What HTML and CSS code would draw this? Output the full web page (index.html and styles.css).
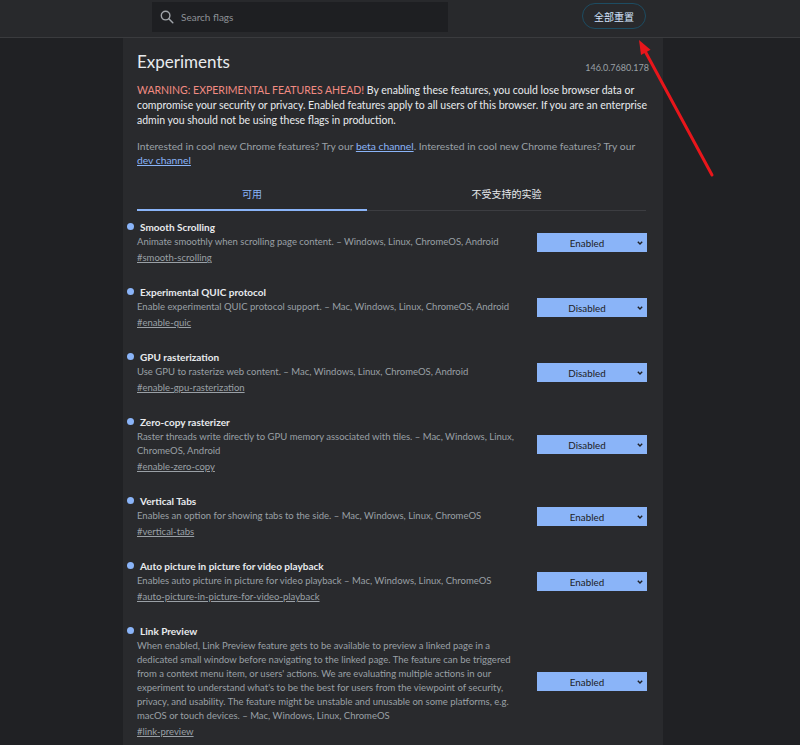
FILE: index.html
```html
<!DOCTYPE html>
<html lang="zh-CN">
<head>
  <meta charset="UTF-8" />
  <meta name="viewport" content="width=device-width, initial-scale=1.0" />
  <title>Experiments</title>
  <link rel="stylesheet" href="styles.css">
</head>
<body>
  <div class="flags-header">
    <div class="header-inner">
      <div class="search-box">
        <svg class="search-icon" width="14" height="14" viewBox="0 0 14 14">
          <circle cx="5.6" cy="5.6" r="4.3" fill="none" stroke="#a0a4a9" stroke-width="1.4"/>
          <line x1="8.8" y1="8.8" x2="12.8" y2="12.8" stroke="#a0a4a9" stroke-width="1.5" stroke-linecap="round"/>
        </svg>
        <input class="search-input" type="text" placeholder="Search flags">
      </div>
      <button class="reset-button">全部重置</button>
    </div>
  </div>

  <div class="panel">
    <div class="title-row">
      <h1>Experiments</h1>
      <span class="version">146.0.7680.178</span>
    </div>

    <p class="warning"><span class="warning-red">WARNING: EXPERIMENTAL FEATURES AHEAD!</span> By enabling these features, you could lose browser data or compromise your security or privacy. Enabled features apply to all users of this browser. If you are an enterprise admin you should not be using these flags in production.</p>

    <p class="channel">Interested in cool new Chrome features? Try our <a href="#">beta channel</a>. Interested in cool new Chrome features? Try our <a href="#">dev channel</a></p>

    <div class="tabs">
      <div class="tab tab-active">可用</div>
      <div class="tab">不受支持的实验</div>
    </div>

    <div class="experiments">
      <div class="experiment">
        <div class="experiment-text">
          <h3 class="experiment-name">Smooth Scrolling</h3>
          <p class="experiment-desc">Animate smoothly when scrolling page content. – Windows, Linux, ChromeOS, Android</p>
          <a class="experiment-link" href="#">#smooth-scrolling</a>
        </div>
        <div class="select-wrap">
          <select><option>Enabled</option><option>Disabled</option><option>Default</option></select>
          <svg class="chevron" width="6" height="4" viewBox="0 0 6 4"><path d="M0.8 0.8 L3 3 L5.2 0.8" fill="none" stroke="#202124" stroke-width="1.4"/></svg>
        </div>
      </div>

      <div class="experiment">
        <div class="experiment-text">
          <h3 class="experiment-name">Experimental QUIC protocol</h3>
          <p class="experiment-desc">Enable experimental QUIC protocol support. – Mac, Windows, Linux, ChromeOS, Android</p>
          <a class="experiment-link" href="#">#enable-quic</a>
        </div>
        <div class="select-wrap">
          <select><option>Disabled</option><option>Enabled</option><option>Default</option></select>
          <svg class="chevron" width="6" height="4" viewBox="0 0 6 4"><path d="M0.8 0.8 L3 3 L5.2 0.8" fill="none" stroke="#202124" stroke-width="1.4"/></svg>
        </div>
      </div>

      <div class="experiment">
        <div class="experiment-text">
          <h3 class="experiment-name">GPU rasterization</h3>
          <p class="experiment-desc">Use GPU to rasterize web content. – Mac, Windows, Linux, ChromeOS, Android</p>
          <a class="experiment-link" href="#">#enable-gpu-rasterization</a>
        </div>
        <div class="select-wrap">
          <select><option>Disabled</option><option>Enabled</option><option>Default</option></select>
          <svg class="chevron" width="6" height="4" viewBox="0 0 6 4"><path d="M0.8 0.8 L3 3 L5.2 0.8" fill="none" stroke="#202124" stroke-width="1.4"/></svg>
        </div>
      </div>

      <div class="experiment">
        <div class="experiment-text">
          <h3 class="experiment-name">Zero-copy rasterizer</h3>
          <p class="experiment-desc">Raster threads write directly to GPU memory associated with tiles. – Mac, Windows, Linux, ChromeOS, Android</p>
          <a class="experiment-link" href="#">#enable-zero-copy</a>
        </div>
        <div class="select-wrap">
          <select><option>Disabled</option><option>Enabled</option><option>Default</option></select>
          <svg class="chevron" width="6" height="4" viewBox="0 0 6 4"><path d="M0.8 0.8 L3 3 L5.2 0.8" fill="none" stroke="#202124" stroke-width="1.4"/></svg>
        </div>
      </div>

      <div class="experiment">
        <div class="experiment-text">
          <h3 class="experiment-name">Vertical Tabs</h3>
          <p class="experiment-desc">Enables an option for showing tabs to the side. – Mac, Windows, Linux, ChromeOS</p>
          <a class="experiment-link" href="#">#vertical-tabs</a>
        </div>
        <div class="select-wrap">
          <select><option>Enabled</option><option>Disabled</option><option>Default</option></select>
          <svg class="chevron" width="6" height="4" viewBox="0 0 6 4"><path d="M0.8 0.8 L3 3 L5.2 0.8" fill="none" stroke="#202124" stroke-width="1.4"/></svg>
        </div>
      </div>

      <div class="experiment">
        <div class="experiment-text">
          <h3 class="experiment-name">Auto picture in picture for video playback</h3>
          <p class="experiment-desc">Enables auto picture in picture for video playback – Mac, Windows, Linux, ChromeOS</p>
          <a class="experiment-link" href="#">#auto-picture-in-picture-for-video-playback</a>
        </div>
        <div class="select-wrap">
          <select><option>Enabled</option><option>Disabled</option><option>Default</option></select>
          <svg class="chevron" width="6" height="4" viewBox="0 0 6 4"><path d="M0.8 0.8 L3 3 L5.2 0.8" fill="none" stroke="#202124" stroke-width="1.4"/></svg>
        </div>
      </div>

      <div class="experiment">
        <div class="experiment-text">
          <h3 class="experiment-name">Link Preview</h3>
          <p class="experiment-desc">When enabled, Link Preview feature gets to be available to preview a linked page in a dedicated small window before navigating to the linked page. The feature can be triggered from a context menu item, or users' actions. We are evaluating multiple actions in our experiment to understand what's to be the best for users from the viewpoint of security, privacy, and usability. The feature might be unstable and unusable on some platforms, e.g. macOS or touch devices. – Mac, Windows, Linux, ChromeOS</p>
          <a class="experiment-link" href="#">#link-preview</a>
        </div>
        <div class="select-wrap">
          <select><option>Enabled</option><option>Disabled</option><option>Default</option></select>
          <svg class="chevron" width="6" height="4" viewBox="0 0 6 4"><path d="M0.8 0.8 L3 3 L5.2 0.8" fill="none" stroke="#202124" stroke-width="1.4"/></svg>
        </div>
      </div>
    </div>
  </div>

  <!-- annotation arrow pointing at the reset button -->
  <svg class="annotation" width="800" height="745" viewBox="0 0 800 745">
    <line x1="712" y1="175" x2="645.5" y2="52" stroke="#e8161b" stroke-width="3" stroke-linecap="round"/>
    <polygon points="639,40 650.5,49.7 641,55" fill="#e8161b"/>
  </svg>
</body>
</html>
```

FILE: styles.css
```css
* {
  box-sizing: border-box;
}

body {
  margin: 0;
  background-color: #202124;
  font-family: Lato, "Noto Sans CJK SC", sans-serif;
  font-size: 10px;
  color: #e8eaed;
  height: 745px;
  overflow: hidden;
}

.flags-header {
  height: 38px;
  background: #28292c;
  border-bottom: 1px solid #3a3b3e;
  padding-top: 2px;
}

.header-inner {
  margin-left: 152px;
  width: 494px;
  display: flex;
  justify-content: space-between;
  align-items: flex-start;
}

.search-box {
  width: 296px;
  height: 30px;
  background: #1e1f22;
  display: flex;
  align-items: center;
  padding-left: 8px;
  gap: 5px;
}

.search-input {
  flex: 1;
  background: transparent;
  border: none;
  outline: none;
  font-family: Lato, sans-serif;
  font-size: 10px;
  color: #e8eaed;
}

.search-input::placeholder {
  color: #8d9196;
}

.reset-button {
  margin-top: 1px;
  width: 64px;
  height: 26px;
  border: 1px solid #1d4c62;
  border-radius: 13px;
  background: transparent;
  color: #d2e3fc;
  font-family: "Noto Sans CJK SC", sans-serif;
  font-size: 10px;
  padding: 0;
  cursor: pointer;
}

.panel {
  margin-left: 123px;
  width: 540px;
  min-height: 707px;
  background: #292a2d;
  padding: 12px 16px 0 14px;
}

.title-row {
  display: flex;
  justify-content: space-between;
  align-items: flex-end;
}

.title-row h1 {
  margin: 0;
  font-size: 17px;
  font-weight: 400;
  line-height: 24px;
  color: #e8eaed;
}

.version {
  font-size: 9px;
  color: #9aa0a6;
  line-height: 14px;
  margin-bottom: -1px;
  margin-right: -2px;
}

.warning {
  margin: 9px 0 0;
  font-size: 10.5px;
  line-height: 15px;
  color: #e8eaed;
}

.warning-red {
  color: #f28b82;
}

.channel {
  margin: 11px 0 0;
  font-size: 10.3px;
  line-height: 14px;
  color: #9aa0a6;
}

.channel a {
  color: #8ab4f8;
}

.tabs {
  display: flex;
  margin-top: 13px;
  margin-right: 1px;
  border-bottom: 1px solid #3c3d41;
}

.tab {
  font-family: "Noto Sans CJK SC", sans-serif;
  font-size: 10px;
  text-align: center;
  padding: 6px 0 8px;
  color: #e8eaed;
  flex: 1;
}

.tab-active {
  flex: 0 0 230px;
  color: #8ab4f8;
  border-bottom: 2px solid #8ab4f8;
  margin-bottom: -1px;
}

.experiments {
  padding-top: 8px;
}

.experiment {
  display: flex;
  align-items: center;
  margin-bottom: 18px;
}

.experiment-text {
  flex: 1;
  padding-right: 10px;
}

.experiment-name {
  position: relative;
  margin: 0;
  padding-left: 3px;
  font-size: 10px;
  font-weight: 700;
  line-height: 16px;
  color: #e8eaed;
}

.experiment-name::before {
  content: "";
  position: absolute;
  left: -10px;
  top: 4px;
  width: 7px;
  height: 7px;
  border-radius: 50%;
  background: #8ab4f8;
}

.experiment-desc {
  margin: 0;
  font-size: 9.5px;
  line-height: 14px;
  color: #9aa0a6;
}

.experiment-link {
  display: block;
  margin-top: 1px;
  font-size: 9.5px;
  line-height: 16px;
  color: #9aa0a6;
}

.select-wrap {
  position: relative;
  width: 110px;
  height: 19px;
}

.select-wrap select {
  appearance: none;
  width: 100%;
  height: 100%;
  border: none;
  border-radius: 0;
  background: #8ab4f8;
  color: #202124;
  font-family: Lato, sans-serif;
  font-size: 9.8px;
  text-align: center;
  text-align-last: center;
  padding: 0 10px 0 0;
}

.chevron {
  position: absolute;
  right: 4px;
  top: 8px;
  pointer-events: none;
}

.annotation {
  position: absolute;
  left: 0;
  top: 0;
  pointer-events: none;
}
```
